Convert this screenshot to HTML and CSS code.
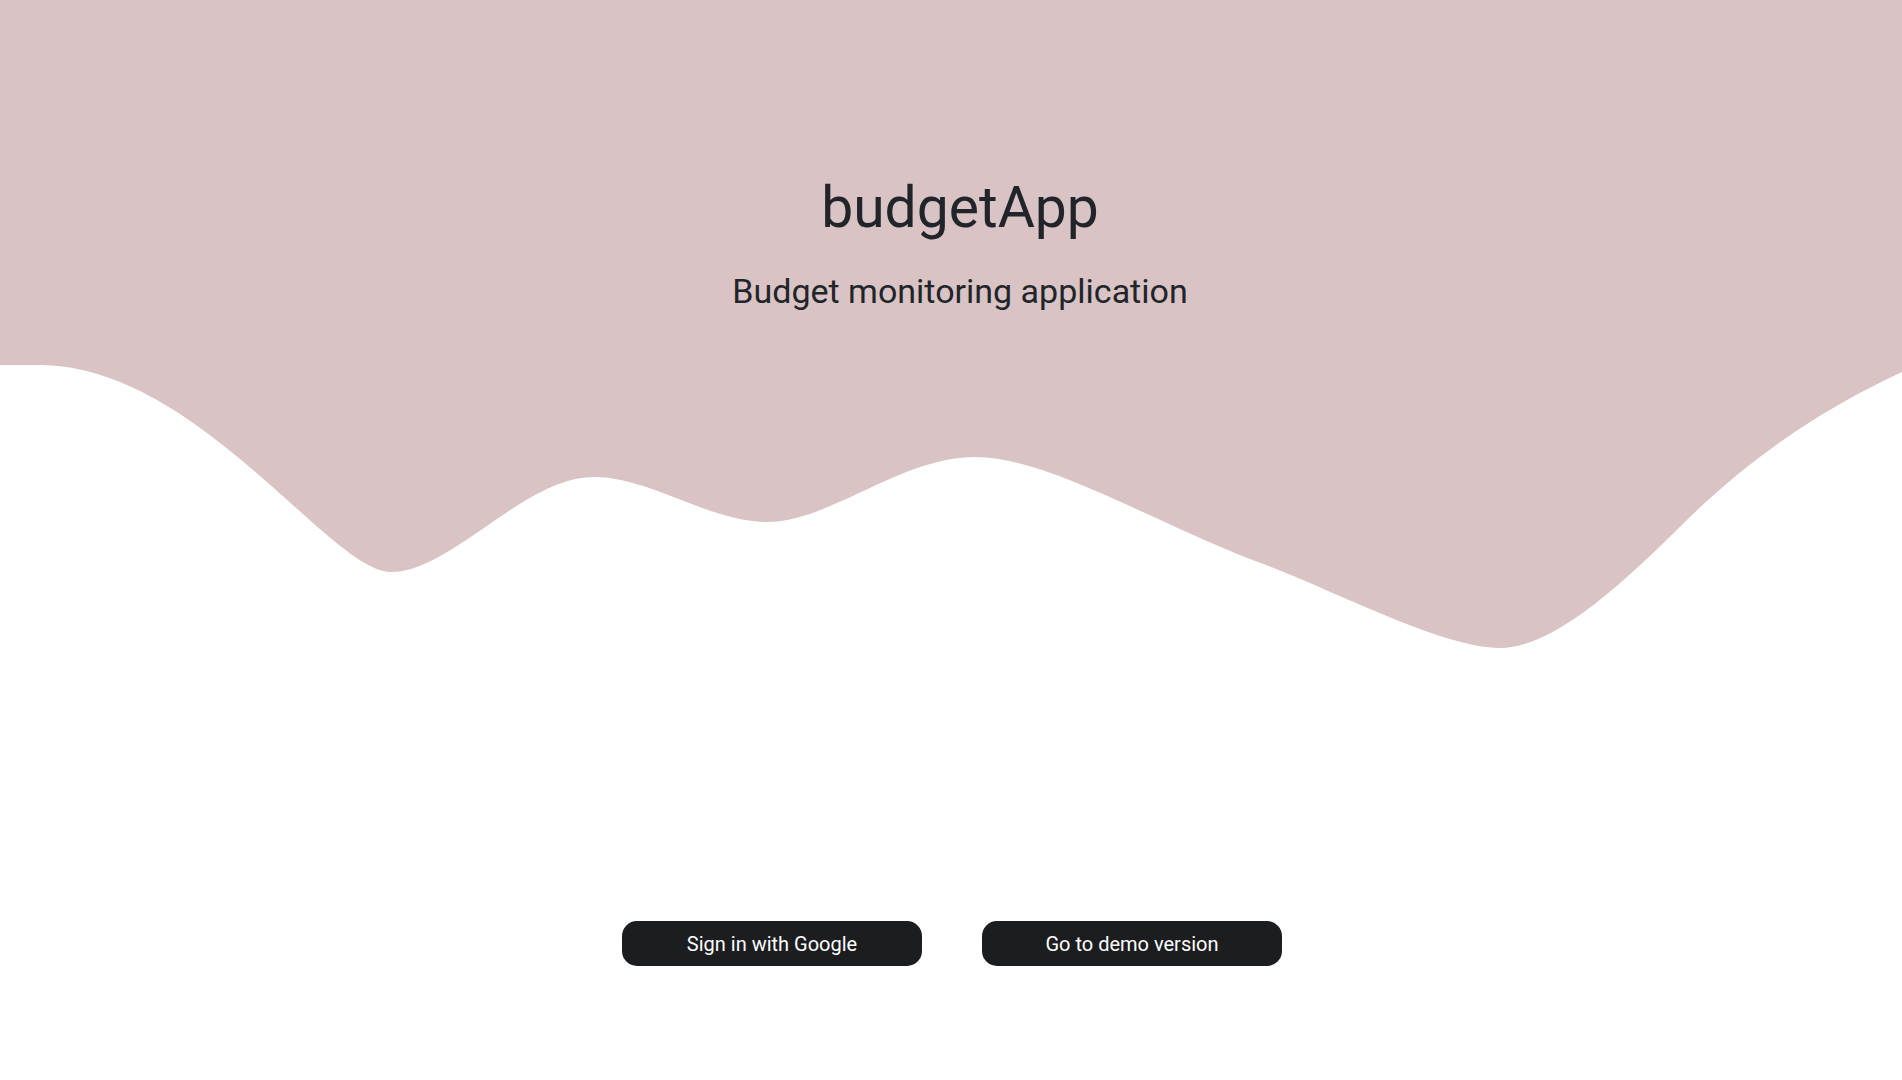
FILE: index.html
```html
<!DOCTYPE html>
<html lang="en">
<head>
<meta charset="utf-8">
<title>budgetApp</title>
<link rel="stylesheet" href="styles.css">
</head>
<body>
<div class="page">
  <svg class="wave" viewBox="0 0 1902 1080" preserveAspectRatio="none" aria-hidden="true">
    <path fill="#d9c3c4" d="M0,365 L40,365 C198,366 330,572 391,572 C451,572 524,477 594,477 C650,477 710,522 767,522 C830,522 900,457 975,457 C1045,457 1150,520 1250,559 C1330,587.8 1440,648 1500,648 C1560,648 1640,566 1690,517 C1750,458.2 1822,408.8 1902,372 L1902,0 L0,0 Z"/>
  </svg>
  <main class="content">
    <header class="hero">
      <h1 class="title">budgetApp</h1>
      <p class="subtitle">Budget monitoring application</p>
    </header>
    <div class="actions">
      <button class="btn" type="button">Sign in with Google</button>
      <button class="btn" type="button">Go to demo version</button>
    </div>
  </main>
</div>
</body>
</html>
```

FILE: styles.css
```css
html, body {
  margin: 0;
  padding: 0;
}

body {
  font-family: Roboto, "Liberation Sans", sans-serif;
  color: #212529;
  background: #ffffff;
}

.page {
  position: relative;
  height: 100vh;
  overflow: hidden;
}

.wave {
  position: absolute;
  top: 0;
  left: 0;
  width: 100%;
  height: 100%;
  display: block;
}

.content {
  position: relative;
  display: flex;
  flex-direction: column;
  align-items: center;
  height: 100%;
}

.hero {
  padding-top: 174px;
  padding-left: 18px;
  text-align: center;
}

.title {
  margin: 0;
  font-size: 57px;
  font-weight: 400;
  line-height: 1.2;
}

.subtitle {
  margin: 29px 0 0;
  font-size: 34px;
  font-weight: 400;
  line-height: 1.2;
}

.actions {
  margin-top: auto;
  margin-bottom: 114px;
  padding-left: 2px;
  display: flex;
  gap: 60px;
}

.btn {
  width: 300px;
  height: 45px;
  border: none;
  border-radius: 15px;
  background: #1c1d1f;
  color: #ffffff;
  font-family: Roboto, "Liberation Sans", sans-serif;
  font-size: 20px;
  font-weight: 400;
  cursor: pointer;
}
```
